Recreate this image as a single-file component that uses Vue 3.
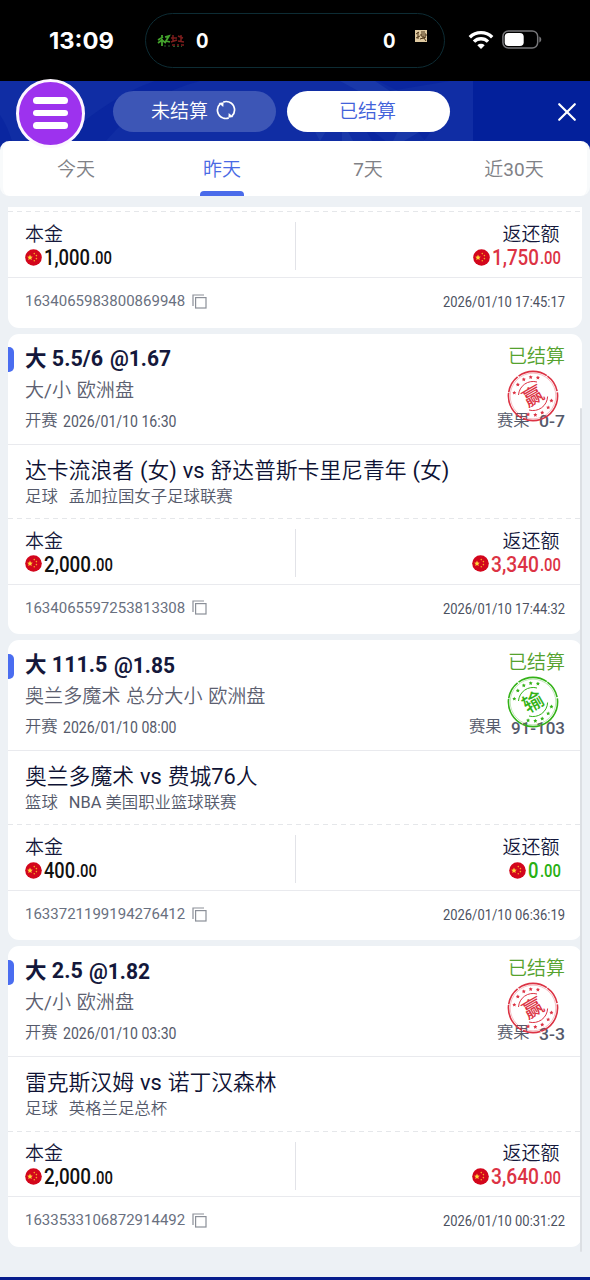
<script setup>
import { h } from 'vue'

// Condensed numerals: the text is fitted to a fixed advance width
const Num = (p) =>
  h('svg', { class: 'num', width: p.w, height: p.size, style: { overflow: 'visible', display: 'block', flex: 'none' } }, [
    h('text', {
      x: 0, y: p.size * 0.86, 'font-size': p.size, 'font-weight': p.weight || 400,
      textLength: p.w, lengthAdjust: 'spacingAndGlyphs', fill: 'currentColor',
    }, p.text),
  ])
Num.props = ['text', 'w', 'size', 'weight']

// Latin runs are set one weight step above the Chinese text
const Mixed = (p) =>
  h('span', p.text.split(/([A-Za-z0-9/()]+)/).map((t, i) => (i % 2 ? h('span', { class: 'latin' }, t) : t)))
Mixed.props = ['text']

const tabs = ['今天', '昨天', '7天', '近30天']

const bets = [
  { partial: true, stake: '1,000', stakeW: 46, ret: '1,750', retW: 47, tone: 'red', id: '1634065983800869948', time: '2026/01/10 17:45:17' },
  { pick: '大 5.5/6', odds: '@1.67', kind: '大/小 欧洲盘', start: '2026/01/10 16:30', result: '0-7', resultW: 26, stamp: '赢',
    match: '达卡流浪者 (女) vs 舒达普斯卡里尼青年 (女)', sport: '足球', league: '孟加拉国女子足球联赛',
    stake: '2,000', stakeW: 47, ret: '3,340', retW: 48, tone: 'red', id: '1634065597253813308', time: '2026/01/10 17:44:32' },
  { pick: '大 111.5', odds: '@1.85', kind: '奥兰多魔术 总分大小 欧洲盘', start: '2026/01/10 08:00', result: '91-103', resultW: 54, stamp: '输',
    match: '奥兰多魔术 vs 费城76人', sport: '篮球', league: 'NBA 美国职业篮球联赛',
    stake: '400', stakeW: 31, ret: '0', retW: 10.5, tone: 'green', id: '1633721199194276412', time: '2026/01/10 06:36:19' },
  { pick: '大 2.5', odds: '@1.82', kind: '大/小 欧洲盘', start: '2026/01/10 03:30', result: '3-3', resultW: 26, stamp: '赢',
    match: '雷克斯汉姆 vs 诺丁汉森林', sport: '足球', league: '英格兰足总杯',
    stake: '2,000', stakeW: 47, ret: '3,640', retW: 48, tone: 'red', id: '1633533106872914492', time: '2026/01/10 00:31:22' },
]

const dots = [-170, -143, -119, -97, -75, 14, 37, 61, 83, 105].map((a) => {
  const r = (a * Math.PI) / 180
  return { x: 26 + 19 * Math.cos(r), y: 26 + 19 * Math.sin(r) }
})
</script>

<template>
  <div class="page">
    <div class="status">
      <div class="clock"><Num text="13:09" :w="65" :size="23" :weight="700" /></div>
      <div class="island">
        <svg class="teamA" width="28" height="14" viewBox="0 0 28 14">
          <path d="M1 6l5-3M5 1v11M1 9l4-3 4 3M8 3l4-1-3 5 4 1" stroke="#43a32c" stroke-width="1.8" fill="none" />
          <path d="M14 4h6M16 1v7M14 8l6-2M21 2l5 2M24 1v7M21 7l6 1M15 11h3M20 11h2M24 11h3" stroke="#7c1d1c" stroke-width="1.5" fill="none" />
          <path d="M7 12h7M16 12.5h9" stroke="#255c29" stroke-width="1" stroke-dasharray="2 2" />
        </svg>
        <Num class="score" text="0" :w="12.5" :size="20.5" :weight="700" />
        <Num class="score second" text="0" :w="12.5" :size="20.5" :weight="700" />
        <svg class="teamB" width="12" height="12" viewBox="0 0 12 12">
          <rect width="12" height="12" fill="#dfc9a0" />
          <path d="M1 4l3-2M3 2v7M1 8l4-2M6 2h4M6 4h5v2H6zM8 6v3M5 9l6-2M9 8l2 3" stroke="#4b3316" stroke-width="1" fill="none" />
        </svg>
      </div>
      <svg class="wifi" width="26" height="20" viewBox="0 0 26 20" fill="none" stroke="#fff" stroke-width="3.4">
        <path d="M1.8 7.2a16 16 0 0 1 22.4 0" />
        <path d="M6 11.6a10 10 0 0 1 14 0" />
        <path d="M13 19l-3.7-3.8a5.4 5.4 0 0 1 7.4 0z" fill="#fff" stroke="none" />
      </svg>
      <svg class="battery" width="40" height="19" viewBox="0 0 40 19">
        <rect x="0.9" y="0.9" width="34.8" height="17.2" rx="5.5" fill="none" stroke="#77777a" stroke-width="1.5" />
        <rect x="2.7" y="2.9" width="19" height="13.2" rx="3.8" fill="#fff" />
        <path d="M37.3 6.5c2.6 1 2.6 5 0 6z" fill="#77777a" />
      </svg>
    </div>

    <header class="header">
      <svg class="decor" width="590" height="76" viewBox="0 0 590 76">
        <path d="M0 0H473V76H0z" fill="#102da4" />
        <path d="M0 34q7 10 12 26v16H0zM155 0h45q-55 14-94 60H60Q112 14 155 0z" fill="#04209b" opacity=".5" />
        <path d="M340 0h38l24 12h-40zM320 60l-14-26h30zM342 76V40l20 36zM385 76l20-40 34 40z" fill="#2143ae" opacity=".5" />
        <path d="M375 0l15 10 60-10zM360 40l28 22-6 14zM404 60h20l14-20z" fill="#04209b" opacity=".5" />
      </svg>
      <div class="pill muted">
        <span>未结算</span>
        <svg width="20" height="20" viewBox="0 0 20 20" fill="none" stroke="#fff" stroke-width="1.7">
          <path d="M7 18A8.4 8.4 0 0 1 4.2 3.9M13 2a8.4 8.4 0 0 1 2.8 14.1" />
          <path d="M7.3 2.1a8.2 8.2 0 0 1 5.7-.1M7 18a8 8 0 0 0 5.7-.1" />
          <path d="M2.6 2.9l5-.6-.3 4.6zM17.4 17.1l-5 .6.3-4.6z" fill="#fff" stroke="none" />
        </svg>
      </div>
      <div class="pill active"><span>已结算</span></div>
      <svg class="close" width="20" height="20" viewBox="0 0 20 20" stroke="#fff" stroke-width="2.2" stroke-linecap="round">
        <path d="M2.2 2.2l15.6 15.6M17.8 2.2L2.2 17.8" />
      </svg>
      <div class="menu"><i></i><i></i><i></i></div>
    </header>

    <nav class="tabs">
      <div v-for="(t, i) in tabs" :key="t" class="tab" :class="{ on: i === 1 }"><Mixed :text="t" /></div>
    </nav>

    <main class="list">
      <article v-for="b in bets" :key="b.id" class="card" :class="{ partial: b.partial }">
        <template v-if="!b.partial">
          <section class="head">
            <div class="col">
              <div class="title">{{ b.pick }}<Num class="odds" :text="b.odds" :w="61" :size="22" :weight="700" /></div>
              <div class="kind"><Mixed :text="b.kind" /></div>
              <div class="start">开赛<Num :text="b.start" :w="113.5" :size="16" /></div>
            </div>
            <div class="col right">
              <div class="state">已结算</div>
              <div class="result">赛果<Num :text="b.result" :w="b.resultW" :size="17" :weight="500" /></div>
            </div>
            <svg class="stamp" :class="b.stamp === '赢' ? 'red' : 'green'" width="52" height="52" viewBox="0 0 52 52" fill="none" stroke="currentColor">
              <circle cx="26" cy="26" r="24.6" stroke-width="1.6" stroke-dasharray="30 .7 18 1.2" />
              <circle cx="26" cy="26" r="22.8" stroke-width=".5" opacity=".6" />
              <path d="M11.5 25A14.6 14.6 0 0 1 30 12M40.6 26.5A14.6 14.6 0 0 1 22 40" stroke-width="1" />
              <g fill="currentColor" stroke="none">
                <path v-for="(d, k) in dots" :key="k" d="M0-2l.6 1.2 1.4.2-1 1 .3 1.4L0 1.1l-1.3.7.3-1.4-1-1 1.4-.2z" :transform="`translate(${d.x} ${d.y})`" />
              </g>
              <text x="26" y="33.5" font-size="20.5" font-weight="500" text-anchor="middle" fill="currentColor" stroke="none" transform="rotate(-30 26 26)">{{ b.stamp }}</text>
            </svg>
          </section>
          <section class="match">
            <div class="teams"><Mixed :text="b.match" /></div>
            <div class="league"><span>{{ b.sport }}</span><Mixed :text="b.league" /></div>
          </section>
        </template>
        <section class="money">
          <div class="cell">
            <div class="label">本金</div>
            <div class="amount">
              <svg class="flag" width="17" height="17" viewBox="0 0 17 17">
                <circle cx="8.5" cy="8.5" r="8.3" fill="#d3061c" />
                <path d="M5 5.6l.8 1.9 2 .2-1.5 1.4.4 2L5 10l-1.7 1.1.4-2-1.5-1.4 2-.2z" fill="#ffd83a" />
                <g fill="#f5a623"><circle cx="9.3" cy="4.6" r=".8" /><circle cx="11.4" cy="6.6" r=".8" /><circle cx="11.4" cy="9.6" r=".8" /><circle cx="9.3" cy="11.8" r=".8" /></g>
              </svg>
              <Num class="int" :text="b.stake" :w="b.stakeW" :size="21.5" :weight="500" />
              <Num class="dec" text=".00" :w="21" :size="17.5" :weight="500" />
            </div>
          </div>
          <div class="cell right">
            <div class="label">返还额</div>
            <div class="amount" :class="b.tone">
              <svg class="flag" width="17" height="17" viewBox="0 0 17 17">
                <circle cx="8.5" cy="8.5" r="8.3" fill="#d3061c" />
                <path d="M5 5.6l.8 1.9 2 .2-1.5 1.4.4 2L5 10l-1.7 1.1.4-2-1.5-1.4 2-.2z" fill="#ffd83a" />
                <g fill="#f5a623"><circle cx="9.3" cy="4.6" r=".8" /><circle cx="11.4" cy="6.6" r=".8" /><circle cx="11.4" cy="9.6" r=".8" /><circle cx="9.3" cy="11.8" r=".8" /></g>
              </svg>
              <Num class="int" :text="b.ret" :w="b.retW" :size="21.5" :weight="500" />
              <Num class="dec" text=".00" :w="21" :size="17.5" :weight="500" />
            </div>
          </div>
        </section>
        <section class="foot">
          <span class="id">{{ b.id }}</span>
          <svg width="15" height="15" viewBox="0 0 15 15" fill="none" stroke="#8b8f98" stroke-width="1.2">
            <path d="M1 12V1h11" /><rect x="3.6" y="3.6" width="10.4" height="10.4" />
          </svg>
          <Num class="time" :text="b.time" :w="122" :size="15.3" />
        </section>
      </article>
      <div class="scrollbar"></div>
    </main>
    <div class="bottom"></div>
  </div>
</template>

<style>
body { margin: 0; }
.latin { font-weight: 400; }
</style>
<style scoped>
.page { width: 590px; height: 1280px; display: flex; flex-direction: column; overflow: hidden; background: #edf1f5; font-family: Roboto, "Noto Sans CJK SC", sans-serif; font-weight: 350; color: #14183b; white-space: nowrap; }
.status { height: 81px; flex: none; background: #000; color: #fff; display: flex; font-family: Inter, sans-serif; }
.clock { margin: 29px 0 0 49px; width: 65px; }
.island { box-sizing: border-box; margin: 13px 0 0 31px; width: 300px; height: 55px; border: 1.5px solid #0d2c34; border-radius: 28px; display: flex; align-items: center; padding: 0 17px 0 11px; }
.score { margin-left: 11px; }
.score.second { margin-left: auto; margin-right: 20px; }
.teamB { margin-top: -9px; }
.wifi { margin: 30px 0 0 23px; }
.battery { margin: 30px 0 0 8px; }
.header { position: relative; height: 60px; flex: none; background: #03209b; display: flex; align-items: center; }
.decor { position: absolute; left: 0; top: 0; background: #03209b; }
.pill { position: relative; width: 163px; height: 41px; border-radius: 21px; display: flex; align-items: center; justify-content: center; gap: 8px; font-size: 19px; box-sizing: border-box; padding-right: 2px; }
.pill span { margin-top: -3px; }
.pill svg { margin-top: -2px; }
.muted { margin-left: 113px; background: #3d56b6; color: #fff; }
.active { margin-left: 11px; background: #fff; color: #4262da; }
.close { position: relative; margin: 1px 0 0 107px; }
.menu { position: absolute; z-index: 3; left: 15.5px; top: -2.5px; width: 69px; height: 69px; box-sizing: border-box; border: 3.5px solid #fdf6ff; border-radius: 50%; background: #9d32ee; display: flex; flex-direction: column; align-items: center; justify-content: center; gap: 6.3px; }
.menu i { width: 35px; height: 6.4px; border-radius: 4px; background: #fff; }
.tabs { position: relative; height: 55px; flex: none; width: 590px; background: #fff; border-radius: 9px; display: flex; box-sizing: border-box; border-left: 3px solid #f8fafb; border-right: 3px solid #f8fafb; }
.tab { position: relative; flex: 1; text-align: center; font-size: 19px; line-height: 57px; height: 55px; color: #808186; }
.tab.on { color: #4a6ae4; }
.tab.on::after { content: ""; position: absolute; left: 50%; margin-left: -22px; bottom: 0; width: 44px; height: 5px; border-radius: 4px 4px 0 0; background: #4a6bea; }
.list { position: relative; flex: 1; padding: 11px 8.5px 0 8px; display: flex; flex-direction: column; gap: 6px; }
.card { position: relative; background: #fff; border-radius: 11px; height: 300.3px; flex: none; }
.card.partial { height: 116.5px; border-radius: 0 0 11px 11px; padding-top: 4.4px; }
.head { position: relative; height: 110.8px; box-sizing: border-box; border-bottom: 1.4px solid #e9eaee; padding: 10px 16.5px 0 17px; display: flex; justify-content: space-between; }
.head::before { content: ""; position: absolute; left: 0; top: 13.5px; width: 5.5px; height: 25px; border-radius: 0 5px 5px 0; background: #4a6df0; }
.title { height: 30px; display: flex; align-items: center; gap: 6.5px; font-size: 21.5px; font-weight: 700; line-height: 30px; }
.odds { margin-top: -1px; }
.kind { font-size: 19.1px; line-height: 32px; color: #5c6070; padding-top: 1px; height: 32px; box-sizing: border-box; word-spacing: 1px; }
.start, .result { height: 30px; display: flex; align-items: center; gap: 5.5px; font-size: 16.3px; line-height: 30px; color: #555a6b; }
.start .num, .result .num { margin-top: 0; }
.right { display: flex; flex-direction: column; align-items: flex-end; }
.state { font-size: 19px; line-height: 30px; margin: -2px 0 34px; color: #55a22e; }
.result { gap: 9.5px; }
.stamp { position: absolute; left: 499px; top: 36px; }
.red { color: #dc3344; }
.green { color: #33b217; }
.match { height: 73.4px; box-sizing: border-box; padding: 11px 17px 0; }
.teams { font-size: 21.8px; line-height: 30px; word-spacing: .6px; color: #0e1234; }
.league { display: flex; gap: 11px; font-size: 16.4px; line-height: 21px; color: #555a6b; }
.money { position: relative; height: 66.6px; box-sizing: border-box; border-bottom: 1.4px solid #e9eaee; display: flex; justify-content: space-between; padding: 10.5px 21px 0 17px; }
.money::before { content: ""; position: absolute; left: 0; right: 0; top: 0; height: 1px; background: repeating-linear-gradient(90deg, #e5e7ea 0 5px, transparent 5px 9px); }
.money::after { content: ""; position: absolute; left: 286.5px; top: 11px; width: 1px; height: 48px; background: #e2e3e8; }
.label { font-size: 19px; line-height: 26px; height: 24.4px; margin-right: 1px; }
.amount { display: flex; align-items: center; height: 22px; color: #111; margin-left: -.5px; }
.amount.red { color: #dc3344; }
.amount.green { color: #28b012; }
.int { margin: -1px 0 0 2px; }
.dec { margin: 1.5px 0 0 1px; }
.foot { height: 49.4px; display: flex; align-items: center; padding: 0 16.5px 3px 17px; box-sizing: border-box; color: #4c515f; }
.id { font-size: 15px; width: 161px; margin-right: 6px; font-weight: 400; color: #697080; }
.time { margin-left: auto; margin-top: 1px; }
.scrollbar { position: absolute; left: 580px; top: 212px; width: 2px; height: 844px; background: #dcdfe3; border-radius: 1px; }
.bottom { height: 3px; flex: none; background: #071c8c; }
</style>
